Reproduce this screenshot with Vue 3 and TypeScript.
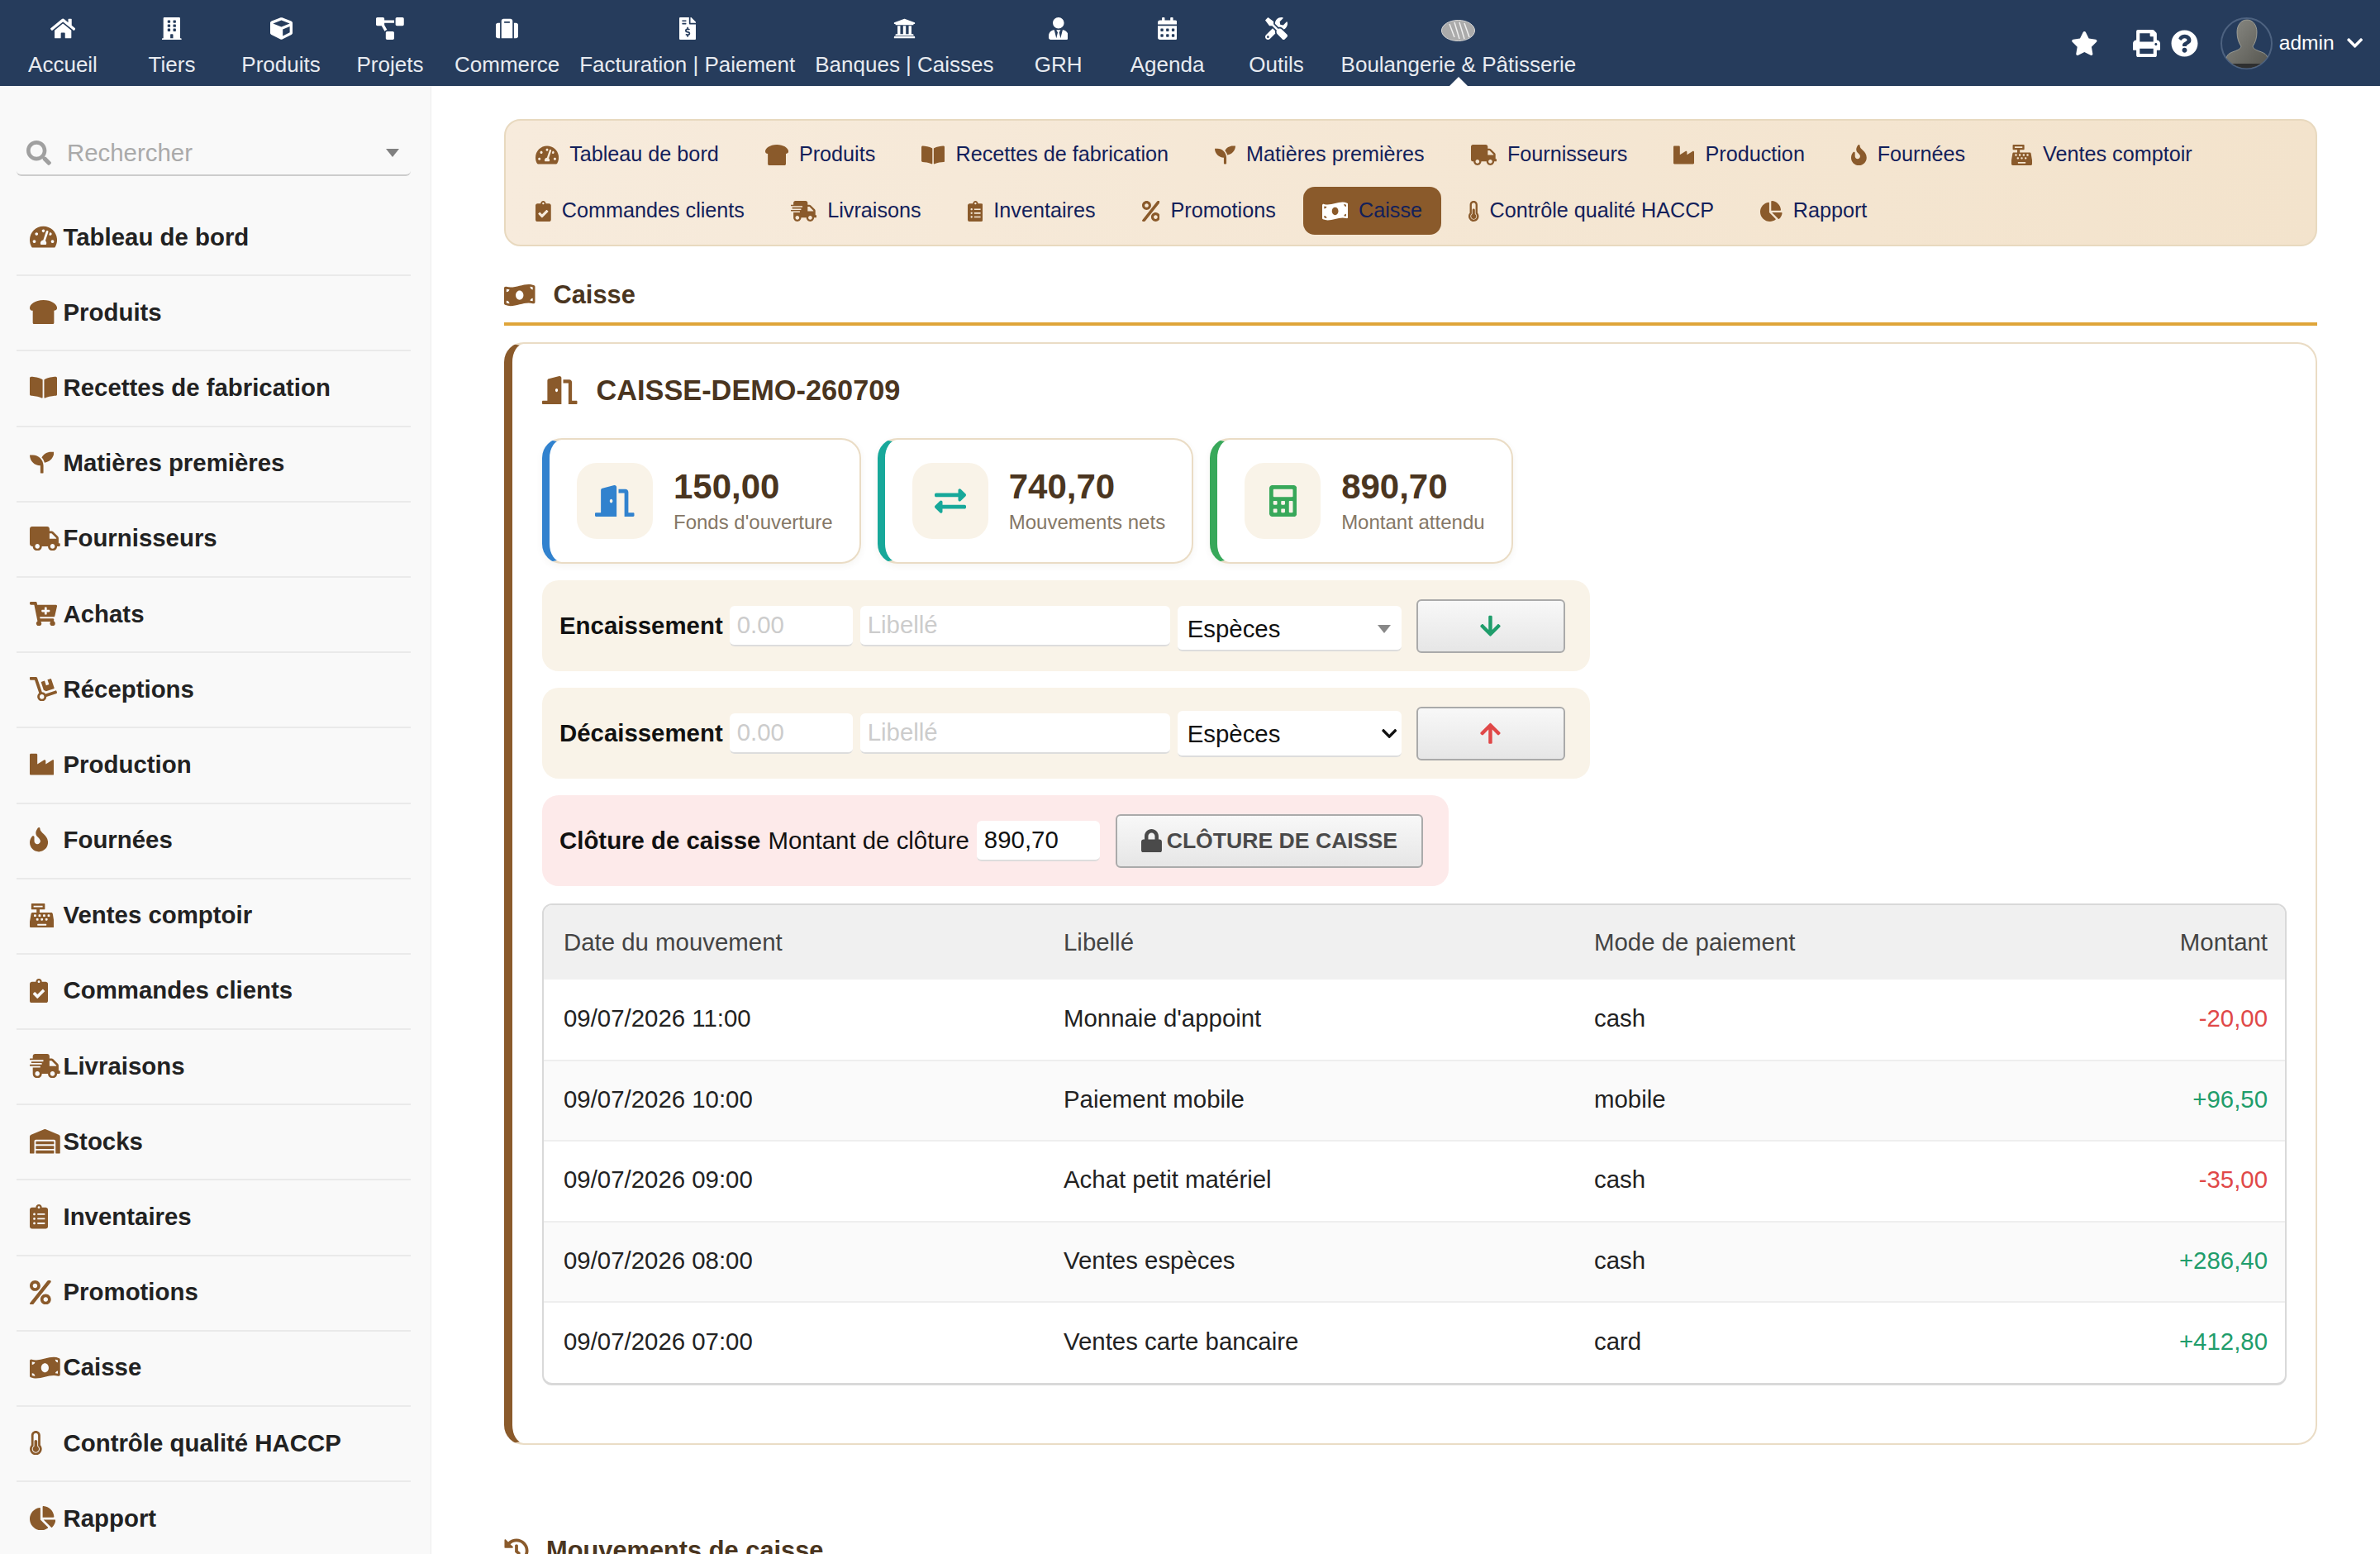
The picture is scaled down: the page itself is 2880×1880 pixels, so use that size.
<script setup lang="ts">
import { h } from 'vue'

// FontAwesome 5 style glyphs: [width on a 512 tall grid, path]
const icons: Record<string, [number, string]> = {
  home: [576, 'M280.37 148.26L96 300.11V464a16 16 0 0 0 16 16l112.06-.29a16 16 0 0 0 15.92-16V368a16 16 0 0 1 16-16h64a16 16 0 0 1 16 16v95.64a16 16 0 0 0 16 16.05L464 480a16 16 0 0 0 16-16V300L295.67 148.26a12.19 12.19 0 0 0-15.3 0zM571.6 251.47L488 182.56V44.05a12 12 0 0 0-12-12h-56a12 12 0 0 0-12 12v72.61L318.47 43a48 48 0 0 0-61 0L4.34 251.47a12 12 0 0 0-1.6 16.9l25.5 31A12 12 0 0 0 45.15 301l235.22-193.74a12.19 12.19 0 0 1 15.3 0L530.9 301a12 12 0 0 0 16.9-1.6l25.5-31a12 12 0 0 0-1.7-16.93z'],
  building: [448, 'M436 480h-20V24c0-13.255-10.745-24-24-24H56C42.745 0 32 10.745 32 24v456H12c-6.627 0-12 5.373-12 12v20h448v-20c0-6.627-5.373-12-12-12zM128 76c0-6.627 5.373-12 12-12h40c6.627 0 12 5.373 12 12v40c0 6.627-5.373 12-12 12h-40c-6.627 0-12-5.373-12-12V76zm0 96c0-6.627 5.373-12 12-12h40c6.627 0 12 5.373 12 12v40c0 6.627-5.373 12-12 12h-40c-6.627 0-12-5.373-12-12v-40zm52 148h-40c-6.627 0-12-5.373-12-12v-40c0-6.627 5.373-12 12-12h40c6.627 0 12 5.373 12 12v40c0 6.627-5.373 12-12 12zm76 160h-64v-84c0-6.627 5.373-12 12-12h40c6.627 0 12 5.373 12 12v84zm64-172c0 6.627-5.373 12-12 12h-40c-6.627 0-12-5.373-12-12v-40c0-6.627 5.373-12 12-12h40c6.627 0 12 5.373 12 12v40zm0-96c0 6.627-5.373 12-12 12h-40c-6.627 0-12-5.373-12-12v-40c0-6.627 5.373-12 12-12h40c6.627 0 12 5.373 12 12v40zm0-96c0 6.627-5.373 12-12 12h-40c-6.627 0-12-5.373-12-12V76c0-6.627 5.373-12 12-12h40c6.627 0 12 5.373 12 12v40z'],
  cube: [512, 'M239.1 6.3l-208 78c-18.7 7-31.1 25-31.1 45v225.1c0 18.2 10.3 34.8 26.5 42.9l208 104c13.5 6.8 29.4 6.8 42.9 0l208-104c16.3-8.1 26.5-24.8 26.5-42.9V129.3c0-20-12.4-37.9-31.1-44.9l-208-78C262 2.2 250 2.2 239.1 6.3zM256 68.4l192 72v1.1l-192 78-192-78v-1.1l192-72zm32 356V275.5l160-65v133.9l-160 80z'],
  diagram: [640, 'M384 320H256c-17.67 0-32 14.33-32 32v128c0 17.67 14.33 32 32 32h128c17.67 0 32-14.33 32-32V352c0-17.67-14.33-32-32-32zM192 32c0-17.67-14.33-32-32-32H32C14.33 0 0 14.33 0 32v128c0 17.67 14.33 32 32 32h95.72l73.16 128.04C211.98 300.98 232.4 288 256 288h.28L192 175.51V128h224V64H192V32zM608 0H480c-17.67 0-32 14.33-32 32v128c0 17.67 14.33 32 32 32h128c17.67 0 32-14.33 32-32V32c0-17.67-14.33-32-32-32z'],
  suitcase: [512, 'M128 480h256V80c0-26.5-21.5-48-48-48H176c-26.5 0-48 21.5-48 48v400zm64-384h128v32H192V96zm320 80v256c0 26.5-21.5 48-48 48h-48V128h48c26.5 0 48 21.5 48 48zM96 480H48c-26.5 0-48-21.5-48-48V176c0-26.5 21.5-48 48-48h48v352z'],
  invoice: [384, 'M377 105L279.1 7c-4.5-4.5-10.6-7-17-7H256v128h128v-6.1c0-6.3-2.5-12.4-7-16.9zm-153 31V0H24C10.7 0 0 10.7 0 24v464c0 13.3 10.7 24 24 24h336c13.3 0 24-10.7 24-24V160H248c-13.2 0-24-10.8-24-24zM64 72c0-4.42 3.58-8 8-8h80c4.42 0 8 3.58 8 8v16c0 4.42-3.58 8-8 8H72c-4.42 0-8-3.58-8-8V72zm0 80v-16c0-4.42 3.58-8 8-8h80c4.42 0 8 3.58 8 8v16c0 4.42-3.58 8-8 8H72c-4.42 0-8-3.58-8-8zm144 263.88V440c0 4.42-3.58 8-8 8h-16c-4.42 0-8-3.58-8-8v-24.29c-11.29-.58-22.27-4.52-31.37-11.35-3.9-2.93-4.1-8.77-.57-12.14l11.75-11.21c2.77-2.64 6.89-2.76 10.13-.73 3.87 2.42 8.26 3.72 12.82 3.72h28.11c6.5 0 11.8-5.92 11.8-13.19 0-5.95-3.61-11.19-8.77-12.73l-45-13.5c-18.59-5.58-31.58-23.42-31.58-43.39 0-24.52 19.05-44.44 42.67-45.07V232c0-4.42 3.58-8 8-8h16c4.42 0 8 3.58 8 8v24.29c11.29.58 22.27 4.51 31.37 11.35 3.9 2.93 4.1 8.77.57 12.14l-11.75 11.21c-2.77 2.64-6.89 2.76-10.13.73-3.87-2.43-8.26-3.72-12.82-3.72h-28.11c-6.5 0-11.8 5.92-11.8 13.19 0 5.95 3.61 11.19 8.77 12.73l45 13.5c18.59 5.58 31.58 23.42 31.58 43.39 0 24.53-19.05 44.44-42.67 45.07z'],
  university: [512, 'M496 128v16a8 8 0 0 1-8 8h-24v12c0 6.627-5.373 12-12 12H60c-6.627 0-12-5.373-12-12v-12H24a8 8 0 0 1-8-8v-16a8 8 0 0 1 4.941-7.392l232-88a7.996 7.996 0 0 1 6.118 0l232 88A8 8 0 0 1 496 128zm-24 304H40c-13.255 0-24 10.745-24 24v16a8 8 0 0 0 8 8h464a8 8 0 0 0 8-8v-16c0-13.255-10.745-24-24-24zM96 192v192H60c-6.627 0-12 5.373-12 12v20h416v-20c0-6.627-5.373-12-12-12h-36V192h-64v192h-64V192h-64v192h-64V192H96z'],
  userTie: [448, 'M224 256c70.7 0 128-57.3 128-128S294.7 0 224 0 96 57.3 96 128s57.3 128 128 128zm95.8 32.6L272 480l-32-136 32-56h-96l32 56-32 136-47.8-191.4C56.9 292 0 350.3 0 422.4V464c0 26.5 21.5 48 48 48h352c26.5 0 48-21.5 48-48v-41.6c0-72.1-56.9-130.4-128.2-133.8z'],
  calendar: [448, 'M0 464c0 26.5 21.5 48 48 48h352c26.5 0 48-21.5 48-48V192H0v272zm320-196c0-6.6 5.4-12 12-12h40c6.6 0 12 5.4 12 12v40c0 6.6-5.4 12-12 12h-40c-6.6 0-12-5.4-12-12v-40zm0 128c0-6.6 5.4-12 12-12h40c6.6 0 12 5.4 12 12v40c0 6.6-5.4 12-12 12h-40c-6.6 0-12-5.4-12-12v-40zM192 268c0-6.6 5.4-12 12-12h40c6.6 0 12 5.4 12 12v40c0 6.6-5.4 12-12 12h-40c-6.6 0-12-5.4-12-12v-40zm0 128c0-6.6 5.4-12 12-12h40c6.6 0 12 5.4 12 12v40c0 6.6-5.4 12-12 12h-40c-6.6 0-12-5.4-12-12v-40zM64 268c0-6.6 5.4-12 12-12h40c6.6 0 12 5.4 12 12v40c0 6.6-5.4 12-12 12H76c-6.6 0-12-5.4-12-12v-40zm0 128c0-6.6 5.4-12 12-12h40c6.6 0 12 5.4 12 12v40c0 6.6-5.4 12-12 12H76c-6.6 0-12-5.4-12-12v-40zM400 64h-48V16c0-8.8-7.2-16-16-16h-32c-8.8 0-16 7.2-16 16v48H160V16c0-8.8-7.2-16-16-16h-32c-8.8 0-16 7.2-16 16v48H48C21.5 64 0 85.5 0 112v48h448v-48c0-26.5-21.5-48-48-48z'],
  tools: [512, 'M501.1 395.7L384 278.6c-23.1-23.1-57.6-27.6-85.4-13.9L192 158.1V96L64 0 0 64l96 128h62.1l106.6 106.6c-13.6 27.8-9.2 62.3 13.9 85.4l117.1 117.1c14.6 14.6 38.2 14.6 52.7 0l52.7-52.7c14.5-14.6 14.5-38.2 0-52.7zM331.7 225c28.3 0 54.9 11 74.9 31l19.4 19.4c15.8-6.9 30.8-16.5 43.8-29.5 37.1-37.1 49.7-89.3 37.9-136.7-2.2-9-13.5-12.1-20.1-5.5l-74.4 74.4-67.9-11.3L334 98.9l74.4-74.4c6.6-6.6 3.4-17.9-5.7-20.2-47.4-11.7-99.6.9-136.6 37.9-28.5 28.5-41.9 66.1-41.2 103.6l82.1 82.1c8.1-1.9 16.5-2.9 24.7-2.9zm-103.9 82l-56.7-56.7L18.7 402.8c-25 25-25 65.5 0 90.5s65.5 25 90.5 0l123.6-123.6c-7.6-19.9-9.9-41.6-5-62.7zM64 472c-13.2 0-24-10.8-24-24 0-13.3 10.7-24 24-24s24 10.7 24 24c0 13.2-10.7 24-24 24z'],
  star: [576, 'M259.3 17.8L194 150.2 47.9 171.5c-26.2 3.8-36.7 36.1-17.7 54.6l105.7 103-25 145.5c-4.5 26.3 23.2 46 46.4 33.7L288 439.6l130.7 68.7c23.2 12.2 50.9-7.4 46.4-33.7l-25-145.5 105.7-103c19-18.5 8.5-50.8-17.7-54.6L382 150.2 316.7 17.8c-11.7-23.6-45.6-23.9-57.4 0z'],
  print: [512, 'M448 192V77.25c0-8.49-3.37-16.62-9.37-22.63L393.37 9.37c-6-6-14.14-9.37-22.63-9.37H96C78.33 0 64 14.33 64 32v160c-35.35 0-64 28.65-64 64v112c0 8.84 7.16 16 16 16h48v96c0 17.67 14.33 32 32 32h320c17.67 0 32-14.33 32-32v-96h48c8.84 0 16-7.16 16-16V256c0-35.35-28.65-64-64-64zm-64 256H128v-96h256v96zm0-224H128V64h192v48c0 8.84 7.16 16 16 16h48v96zm48 72c-13.25 0-24-10.75-24-24 0-13.26 10.75-24 24-24s24 10.74 24 24c0 13.25-10.75 24-24 24z'],
  question: [512, 'M504 256c0 136.997-111.043 248-248 248S8 392.997 8 256C8 119.083 119.043 8 256 8s248 111.083 248 248zM262.655 90c-54.497 0-89.255 22.957-116.549 63.758-3.536 5.286-2.353 12.415 2.715 16.258l34.699 26.31c5.205 3.947 12.621 3.008 16.665-2.122 17.864-22.658 30.113-35.797 57.303-35.797 20.429 0 45.698 13.148 45.698 32.958 0 14.976-12.363 22.667-32.534 33.976C247.128 238.528 216 254.941 216 296v4c0 6.627 5.373 12 12 12h56c6.627 0 12-5.373 12-12v-1.333c0-28.462 83.186-29.647 83.186-106.667 0-58.002-60.165-102-116.531-102zM256 338c-25.365 0-46 20.635-46 46 0 25.364 20.635 46 46 46s46-20.636 46-46c0-25.365-20.635-46-46-46z'],
  chevron: [448, 'M207.029 381.476L12.686 187.132c-9.373-9.373-9.373-24.569 0-33.941l22.667-22.667c9.357-9.357 24.522-9.375 33.901-.04L224 284.505l154.745-154.021c9.379-9.335 24.544-9.317 33.901.04l22.667 22.667c9.373 9.373 9.373 24.569 0 33.941L240.971 381.476c-9.373 9.372-24.569 9.372-33.942 0z'],
  search: [512, 'M505 442.7L405.3 343c-4.5-4.5-10.6-7-17-7H372c27.6-35.3 44-79.7 44-128C416 93.1 322.9 0 208 0S0 93.1 0 208s93.1 208 208 208c48.3 0 92.7-16.4 128-44v16.3c0 6.4 2.5 12.5 7 17l99.7 99.7c9.4 9.4 24.6 9.4 33.9 0l28.3-28.3c9.4-9.4 9.4-24.6.1-34zM208 336c-70.7 0-128-57.2-128-128 0-70.7 57.2-128 128-128 70.7 0 128 57.2 128 128 0 70.7-57.2 128-128 128z'],
  gauge: [576, 'M288 32C128.94 32 0 160.94 0 320c0 52.8 14.25 102.26 39.06 144.8 5.61 9.62 16.3 15.2 27.44 15.2h443c11.14 0 21.83-5.58 27.44-15.2C561.75 422.26 576 372.8 576 320c0-159.06-128.94-288-288-288zm0 64c14.71 0 26.58 10.13 30.32 23.65-1.11 2.26-2.64 4.23-3.45 6.67l-9.22 27.67c-5.13 3.49-10.97 6.01-17.64 6.01-17.67 0-32-14.33-32-32S270.33 96 288 96zM96 384c-17.67 0-32-14.33-32-32s14.33-32 32-32 32 14.33 32 32-14.33 32-32 32zm48-160c-17.67 0-32-14.33-32-32s14.33-32 32-32 32 14.33 32 32-14.33 32-32 32zm246.77-72.41l-61.33 184C343.13 347.33 352 364.54 352 384c0 11.72-3.38 22.55-8.88 32H232.88c-5.5-9.45-8.88-20.28-8.88-32 0-33.94 26.5-61.43 59.9-63.59l61.34-184.01c4.17-12.56 17.73-19.45 30.36-15.17 12.57 4.19 19.35 17.79 15.17 30.36zm14.66 57.2l15.52-46.55c3.47-1.29 7.13-2.23 11.05-2.23 17.67 0 32 14.33 32 32s-14.33 32-32 32c-11.38-.01-20.89-6.27-26.57-15.22zM480 384c-17.67 0-32-14.33-32-32s14.33-32 32-32 32 14.33 32 32-14.33 32-32 32z'],
  bread: [576, 'M288 0C108 0 0 93.4 0 169.14 0 199.44 24.24 224 64 224v256c0 17.67 16.12 32 36 32h376c19.88 0 36-14.33 36-32V224c39.76 0 64-24.56 64-54.86C576 93.4 468 0 288 0z'],
  book: [576, 'M542.22 32.05c-54.8 3.11-163.72 14.43-230.96 55.59-4.64 2.84-7.27 7.89-7.27 13.17v363.87c0 11.55 12.63 18.85 23.28 13.49 69.18-34.82 169.23-44.32 218.7-46.92 16.89-.89 30.02-14.43 30.02-30.66V62.75c.01-17.71-15.35-31.74-33.77-30.7zM264.73 87.64C197.5 46.48 88.58 35.17 33.78 32.05 15.36 31.01 0 45.04 0 62.75V400.6c0 16.24 13.13 29.78 30.02 30.66 49.49 2.6 149.59 12.11 218.77 46.95 10.62 5.35 23.21-1.94 23.21-13.46V100.63c0-5.29-2.62-10.14-7.27-12.99z'],
  seedling: [512, 'M64 96H0c0 123.7 100.3 224 224 224v144c0 8.8 7.2 16 16 16h32c8.8 0 16-7.2 16-16V320C288 196.3 187.7 96 64 96zm384-64c-84.2 0-157.4 46.5-195.7 115.2 27.7 30.2 48.2 66.9 59 107.6C424 243.1 512 147.9 512 32h-64z'],
  truck: [640, 'M624 352h-16V243.9c0-12.7-5.1-24.9-14.1-33.9L494 110.1c-9-9-21.2-14.1-33.9-14.1H416V48c0-26.5-21.5-48-48-48H48C21.5 0 0 21.5 0 48v320c0 26.5 21.5 48 48 48h16c0 53 43 96 96 96s96-43 96-96h128c0 53 43 96 96 96s96-43 96-96h48c8.8 0 16-7.2 16-16v-32c0-8.8-7.2-16-16-16zM160 464c-26.5 0-48-21.5-48-48s21.5-48 48-48 48 21.5 48 48-21.5 48-48 48zm320 0c-26.5 0-48-21.5-48-48s21.5-48 48-48 48 21.5 48 48-21.5 48-48 48zm80-208H416V144h44.1l99.9 99.9V256z'],
  cart: [576, 'M504.717 320H211.572l6.545 32h268.418c15.401 0 26.816 14.301 23.403 29.319l-5.517 24.276C523.112 414.668 536 433.828 536 456c0 31.202-25.519 56.444-56.824 55.994-29.823-.429-54.35-24.631-55.155-54.447-.44-16.287 6.085-31.049 16.803-41.548H231.176C241.553 426.165 248 440.326 248 456c0 31.813-26.528 57.431-58.67 55.938-28.54-1.325-51.751-24.385-53.251-52.917-1.158-22.034 10.436-41.455 28.051-51.586L93.883 64H24C10.745 64 0 53.255 0 40V24C0 10.745 10.745 0 24 0h102.529c11.401 0 21.228 8.021 23.513 19.19L159.208 64H551.99c15.401 0 26.816 14.301 23.403 29.319l-47.273 208C525.637 312.246 515.923 320 504.717 320zM408 168h-48v-40c0-8.837-7.163-16-16-16h-16c-8.837 0-16 7.163-16 16v40h-48c-8.837 0-16 7.163-16 16v16c0 8.837 7.163 16 16 16h48v40c0 8.837 7.163 16 16 16h16c8.837 0 16-7.163 16-16v-40h48c8.837 0 16-7.163 16-16v-16c0-8.837-7.163-16-16-16z'],
  dolly: [576, 'M294.2 277.7c18 5 34.7 13.4 49.5 24.7l161.5-53.8c8.4-2.8 12.9-11.9 10.1-20.2L454.9 47.2c-2.8-8.4-11.9-12.9-20.2-10.1l-61.1 20.4 33.1 99.4L346 177l-33.1-99.4-61.6 20.5c-8.4 2.8-12.9 11.9-10.1 20.2l53 159.4zm281 48.7L565 296c-2.8-8.4-11.9-12.9-20.2-10.1l-213.5 71.2c-17.2-22-43.6-36.4-73.5-37L158.4 21.9C154 8.8 141.8 0 128 0H16C7.2 0 0 7.2 0 16v32c0 8.8 7.2 16 16 16h88.9l92.2 276.7c-26.1 20.4-41.7 53.6-36 90.5 6.1 39.4 37.9 72.3 77.3 79.2 60.2 10.7 112.3-34.8 113.4-92.6l213.3-71.2c8.3-2.8 12.9-11.8 10.1-20.2zM256 464c-26.5 0-48-21.5-48-48s21.5-48 48-48 48 21.5 48 48-21.5 48-48 48z'],
  industry: [512, 'M475.115 163.781L336 252.309v-68.28c0-18.916-20.931-30.399-36.885-20.248L160 252.309V56c0-13.255-10.745-24-24-24H24C10.745 32 0 42.745 0 56v400c0 13.255 10.745 24 24 24h464c13.255 0 24-10.745 24-24V184.029c0-18.917-20.931-30.399-36.885-20.248z'],
  fire: [384, 'M216 23.86c0-23.8-30.65-32.77-44.15-13.04C48 191.85 224 200 224 288c0 35.63-29.11 64.46-64.85 63.99-35.17-.45-63.15-29.77-63.15-64.94v-85.51c0-21.7-26.47-32.23-41.43-16.5C27.8 213.16 0 261.33 0 320c0 105.87 86.13 192 192 192s192-86.13 192-192c0-170.29-168-193-168-296.14z'],
  register: [512, 'M511.1 378.8l-26.7-160c-2.6-15.4-15.9-26.7-31.6-26.7H208v-64h96c8.8 0 16-7.2 16-16V16c0-8.8-7.2-16-16-16H48c-8.8 0-16 7.2-16 16v96c0 8.8 7.2 16 16 16h96v64H59.1c-15.6 0-29 11.3-31.6 26.7L.8 378.7c-.6 3.5-.9 7-.9 10.5V480c0 17.7 14.3 32 32 32h448c17.7 0 32-14.3 32-32v-90.7c.1-3.5-.2-7-.8-10.5zM280 248c0-8.8 7.2-16 16-16h16c8.8 0 16 7.2 16 16v16c0 8.8-7.2 16-16 16h-16c-8.8 0-16-7.2-16-16v-16zm-32 64h16c8.8 0 16 7.2 16 16v16c0 8.8-7.2 16-16 16h-16c-8.8 0-16-7.2-16-16v-16c0-8.8 7.2-16 16-16zm-32-80c8.8 0 16 7.2 16 16v16c0 8.8-7.2 16-16 16h-16c-8.8 0-16-7.2-16-16v-16c0-8.8 7.2-16 16-16h16zM80 80V48h192v32H80zm40 200h-16c-8.8 0-16-7.2-16-16v-16c0-8.8 7.2-16 16-16h16c8.8 0 16 7.2 16 16v16c0 8.8-7.2 16-16 16zm16 64v-16c0-8.8 7.2-16 16-16h16c8.8 0 16 7.2 16 16v16c0 8.8-7.2 16-16 16h-16c-8.8 0-16-7.2-16-16zm216 112c0 4.4-3.6 8-8 8H168c-4.4 0-8-3.6-8-8v-16c0-4.4 3.6-8 8-8h176c4.4 0 8 3.6 8 8v16zm24-112c0 8.8-7.2 16-16 16h-16c-8.8 0-16-7.2-16-16v-16c0-8.8 7.2-16 16-16h16c8.8 0 16 7.2 16 16v16zm48-80c0 8.8-7.2 16-16 16h-16c-8.8 0-16-7.2-16-16v-16c0-8.8 7.2-16 16-16h16c8.8 0 16 7.2 16 16v16z'],
  clipCheck: [384, 'M336 64h-80c0-35.3-28.7-64-64-64s-64 28.7-64 64H48C21.5 64 0 85.5 0 112v352c0 26.5 21.5 48 48 48h288c26.5 0 48-21.5 48-48V112c0-26.5-21.5-48-48-48zM192 40c13.3 0 24 10.7 24 24s-10.7 24-24 24-24-10.7-24-24 10.7-24 24-24zm121.2 231.8l-143 141.8c-4.7 4.7-12.3 4.6-17-.1l-82.6-83.3c-4.7-4.7-4.6-12.3.1-17L99.1 285c4.7-4.7 12.3-4.6 17 .1l46 46.4 106-105.2c4.7-4.7 12.3-4.6 17 .1l28.2 28.4c4.7 4.8 4.6 12.3-.1 17z'],
  shipping: [640, 'M624 352h-16V243.9c0-12.7-5.1-24.9-14.1-33.9L494 110.1c-9-9-21.2-14.1-33.9-14.1H416V48c0-26.5-21.5-48-48-48H112C85.5 0 64 21.5 64 48v48H8c-4.4 0-8 3.6-8 8v16c0 4.4 3.6 8 8 8h272c4.4 0 8 3.6 8 8v16c0 4.4-3.6 8-8 8H40c-4.4 0-8 3.6-8 8v16c0 4.4 3.6 8 8 8h208c4.4 0 8 3.6 8 8v16c0 4.4-3.6 8-8 8H8c-4.4 0-8 3.6-8 8v16c0 4.4 3.6 8 8 8h208c4.4 0 8 3.6 8 8v16c0 4.4-3.6 8-8 8H64v128c0 53 43 96 96 96s96-43 96-96h128c0 53 43 96 96 96s96-43 96-96h48c8.8 0 16-7.2 16-16v-32c0-8.8-7.2-16-16-16zM160 464c-26.5 0-48-21.5-48-48s21.5-48 48-48 48 21.5 48 48-21.5 48-48 48zm320 0c-26.5 0-48-21.5-48-48s21.5-48 48-48 48 21.5 48 48-21.5 48-48 48zm80-208H416V144h44.1l99.9 99.9V256z'],
  warehouse: [640, 'M504 352H136.4c-4.4 0-8 3.6-8 8l-.1 48c0 4.4 3.6 8 8 8H504c4.4 0 8-3.6 8-8v-48c0-4.4-3.6-8-8-8zm0 96H136.1c-4.4 0-8 3.6-8 8l-.1 48c0 4.4 3.6 8 8 8h368c4.4 0 8-3.6 8-8v-48c0-4.4-3.6-8-8-8zm0-192H136.6c-4.4 0-8 3.6-8 8l-.1 48c0 4.4 3.6 8 8 8H504c4.4 0 8-3.6 8-8v-48c0-4.4-3.6-8-8-8zm106.5-139L338.4 3.7a48.15 48.15 0 0 0-36.9 0L29.5 117C11.7 124.5 0 141.9 0 161.3V504c0 4.4 3.6 8 8 8h80c4.4 0 8-3.6 8-8V256c0-17.6 14.6-32 32.6-32h382.8c18 0 32.6 14.4 32.6 32v248c0 4.4 3.6 8 8 8h80c4.4 0 8-3.6 8-8V161.3c0-19.4-11.7-36.8-29.5-44.3z'],
  clipList: [384, 'M336 64h-80c0-35.3-28.7-64-64-64s-64 28.7-64 64H48C21.5 64 0 85.5 0 112v352c0 26.5 21.5 48 48 48h288c26.5 0 48-21.5 48-48V112c0-26.5-21.5-48-48-48zM96 424c-13.3 0-24-10.7-24-24s10.7-24 24-24 24 10.7 24 24-10.7 24-24 24zm0-96c-13.3 0-24-10.7-24-24s10.7-24 24-24 24 10.7 24 24-10.7 24-24 24zm0-96c-13.3 0-24-10.7-24-24s10.7-24 24-24 24 10.7 24 24-10.7 24-24 24zm96-192c13.3 0 24 10.7 24 24s-10.7 24-24 24-24-10.7-24-24 10.7-24 24-24zm128 368c0 4.4-3.6 8-8 8H168c-4.4 0-8-3.6-8-8v-16c0-4.4 3.6-8 8-8h144c4.4 0 8 3.6 8 8v16zm0-96c0 4.4-3.6 8-8 8H168c-4.4 0-8-3.6-8-8v-16c0-4.4 3.6-8 8-8h144c4.4 0 8 3.6 8 8v16zm0-96c0 4.4-3.6 8-8 8H168c-4.4 0-8-3.6-8-8v-16c0-4.4 3.6-8 8-8h144c4.4 0 8 3.6 8 8v16z'],
  percent: [448, 'M112 224c61.9 0 112-50.1 112-112S173.9 0 112 0 0 50.1 0 112s50.1 112 112 112zm0-160c26.5 0 48 21.5 48 48s-21.5 48-48 48-48-21.5-48-48 21.5-48 48-48zm224 224c-61.9 0-112 50.1-112 112s50.1 112 112 112 112-50.1 112-112-50.1-112-112-112zm0 160c-26.5 0-48-21.5-48-48s21.5-48 48-48 48 21.5 48 48-21.5 48-48 48zM392.3.2l31.6.1c19.4.1 30.9 21.8 19.7 37.8L77.4 501.6a23.95 23.95 0 0 1-19.6 10.2l-33.4-.1c-19.5 0-30.9-21.9-19.7-37.8l368-463.7C377.2 4 384.5.2 392.3.2z'],
  money: [640, 'M621.16 54.46C582.37 38.19 543.55 32 504.75 32c-123.17-.01-246.33 62.34-369.5 62.34-30.89 0-61.76-3.92-92.65-13.72-3.47-1.1-6.95-1.62-10.35-1.62C15.04 79 0 92.32 0 110.81v317.26c0 12.63 7.23 24.6 18.84 29.46C57.63 473.81 96.45 480 135.25 480c123.17 0 246.34-62.35 369.51-62.35 30.89 0 61.76 3.92 92.65 13.72 3.47 1.1 6.95 1.62 10.35 1.62 17.21 0 32.25-13.32 32.25-31.81V83.93c-.01-12.64-7.24-24.6-18.85-29.47zM48 132.22c20.12 5.04 41.12 7.57 62.72 8.93C104.84 170.54 79 192.69 48 192.69v-60.47zm0 285v-47.78c34.37 0 62.18 27.27 63.71 61.4-22.53-1.81-43.59-6.31-63.71-13.62zM320 352c-44.19 0-80-42.99-80-96 0-53.02 35.82-96 80-96s80 42.98 80 96c0 53.03-35.83 96-80 96zm272 27.78c-17.52-4.39-35.71-6.85-54.32-8.44 5.87-26.08 27.5-45.88 54.32-49.28v57.72zm0-236.11c-30.89-3.91-54.86-29.7-55.81-61.55 19.54 2.17 38.09 6.23 55.81 12.66v48.89z'],
  thermo: [256, 'M192 384c0 35.346-28.654 64-64 64s-64-28.654-64-64c0-23.685 12.876-44.349 32-55.417V224c0-17.673 14.327-32 32-32s32 14.327 32 32v104.583c19.124 11.068 32 31.732 32 55.417zm32-84.653c19.912 22.563 32 52.194 32 84.653 0 70.696-57.303 128-128 128-.299 0-.609-.001-.909-.003C56.789 511.509-.357 453.636.002 383.333.166 351.135 12.225 321.755 32 299.347V96c0-53.019 42.981-96 96-96s96 42.981 96 96v203.347zM208 384c0-34.339-19.37-52.19-32-66.502V96c0-26.467-21.533-48-48-48S80 69.533 80 96v221.498c-12.732 14.428-31.825 32.141-31.999 66.08-.224 43.876 35.563 80.116 79.423 80.42L128 464c44.112 0 80-35.888 80-80z'],
  pie: [544, 'M527.79 288H290.5l158.03 158.03c6.04 6.04 15.98 6.53 22.19.68 38.7-36.46 65.32-85.61 73.13-140.86 1.34-9.46-6.51-17.85-16.06-17.85zm-15.83-64.8C503.72 103.74 408.26 8.28 288.8.04 279.68-.59 272 7.1 272 16.24V240h223.77c9.14 0 16.82-7.68 16.19-16.8zM224 288V50.71c0-9.55-8.39-17.4-17.84-16.06C86.99 51.49-4.1 155.6.14 280.37 4.5 408.51 114.83 513.59 243.03 511.98c50.4-.63 96.97-16.87 135.26-44.03 7.9-5.6 8.42-17.23 1.57-24.08L224 288z'],
  door: [640, 'M624 448h-80V113.45C544 86.19 522.47 64 496 64H384v64h96v384h144c8.84 0 16-7.16 16-16v-32c0-8.84-7.16-16-16-16zM312.24 1.01l-192 49.74C105.99 54.44 96 67.7 96 82.92V448H16c-8.84 0-16 7.16-16 16v32c0 8.84 7.16 16 16 16h336V33.18c0-21.58-19.56-37.41-39.76-32.17zM264 288c-13.25 0-24-14.33-24-32 0-17.67 10.75-32 24-32s24 14.33 24 32c0 17.67-10.75 32-24 32z'],
  exchange: [512, 'M0 168v-16c0-13.255 10.745-24 24-24h360V80c0-21.367 25.899-32.042 40.971-16.971l80 80c9.372 9.373 9.372 24.569 0 33.941l-80 80C409.956 271.982 384 261.456 384 240v-48H24c-13.255 0-24-10.745-24-24zm488 152H128v-48c0-21.314-25.862-32.08-40.971-16.971l-80 80c-9.372 9.373-9.372 24.569 0 33.941l80 80C102.057 463.997 128 453.437 128 432v-48h360c13.255 0 24-10.745 24-24v-16c0-13.255-10.745-24-24-24z'],
  calc: [448, 'M400 0H48C22.4 0 0 22.4 0 48v416c0 25.6 22.4 48 48 48h352c25.6 0 48-22.4 48-48V48c0-25.6-22.4-48-48-48zM128 435c0 6.4-6.4 12.8-12.8 12.8H76.8c-6.4 0-12.8-6.4-12.8-12.8v-38.4c0-6.4 6.4-12.8 12.8-12.8h38.4c6.4 0 12.8 6.4 12.8 12.8V435zm0-128c0 6.4-6.4 12.8-12.8 12.8H76.8c-6.4 0-12.8-6.4-12.8-12.8v-38.4c0-6.4 6.4-12.8 12.8-12.8h38.4c6.4 0 12.8 6.4 12.8 12.8V307zm128 128c0 6.4-6.4 12.8-12.8 12.8h-38.4c-6.4 0-12.8-6.4-12.8-12.8v-38.4c0-6.4 6.4-12.8 12.8-12.8h38.4c6.4 0 12.8 6.4 12.8 12.8V435zm0-128c0 6.4-6.4 12.8-12.8 12.8h-38.4c-6.4 0-12.8-6.4-12.8-12.8v-38.4c0-6.4 6.4-12.8 12.8-12.8h38.4c6.4 0 12.8 6.4 12.8 12.8V307zm128 128c0 6.4-6.4 12.8-12.8 12.8h-38.4c-6.4 0-12.8-6.4-12.8-12.8V268.8c0-6.4 6.4-12.8 12.8-12.8h38.4c6.4 0 12.8 6.4 12.8 12.8V435zm0-256c0 6.4-6.4 12.8-12.8 12.8H76.8c-6.4 0-12.8-6.4-12.8-12.8V76.8C64 70.4 70.4 64 76.8 64h294.4c6.4 0 12.8 6.4 12.8 12.8V179z'],
  arrowDown: [448, 'M413.1 222.5l22.2 22.2c9.4 9.4 9.4 24.6 0 33.9L241 473c-9.4 9.4-24.6 9.4-33.9 0L12.7 278.6c-9.4-9.4-9.4-24.6 0-33.9l22.2-22.2c9.5-9.5 25-9.3 34.3.4L184 343.4V56c0-13.3 10.7-24 24-24h32c13.3 0 24 10.7 24 24v287.4l114.8-120.5c9.3-9.8 24.8-10 34.3-.4z'],
  arrowUp: [448, 'M34.9 289.5l-22.2-22.2c-9.4-9.4-9.4-24.6 0-33.9L207 39c9.4-9.4 24.6-9.4 33.9 0l194.3 194.3c9.4 9.4 9.4 24.6 0 33.9L413 289.4c-9.5 9.5-25 9.3-34.3-.4L264 168.6V456c0 13.3-10.7 24-24 24h-32c-13.3 0-24-10.7-24-24V168.6L69.2 289.1c-9.3 9.8-24.8 10-34.3.4z'],
  lock: [448, 'M400 224h-24v-72C376 68.2 307.8 0 224 0S72 68.2 72 152v72H48c-26.5 0-48 21.5-48 48v192c0 26.5 21.5 48 48 48h352c26.5 0 48-21.5 48-48V272c0-26.5-21.5-48-48-48zm-104 0H152v-72c0-39.7 32.3-72 72-72s72 32.3 72 72v72z'],
  history: [512, 'M504 255.531c.253 136.64-111.18 248.372-247.82 248.468-59.015.042-113.223-20.53-155.822-54.911-11.077-8.94-11.905-25.541-1.839-35.607l11.267-11.267c8.609-8.609 22.353-9.551 31.891-1.984C173.062 425.135 212.781 440 256 440c101.705 0 184-82.311 184-184 0-101.705-82.311-184-184-184-48.814 0-93.149 18.969-126.068 49.932l50.754 50.754c10.08 10.08 2.941 27.314-11.313 27.314H24c-8.837 0-16-7.163-16-16V38.627c0-14.254 17.234-21.393 27.314-11.314l49.372 49.372C129.209 34.136 189.552 8 256 8c136.81 0 247.747 110.78 248 247.531zm-180.912 78.784l9.823-12.63c8.138-10.463 6.253-25.542-4.21-33.679L288 256.349V152c0-13.255-10.745-24-24-24h-16c-13.255 0-24 10.745-24 24v135.651l65.409 50.874c10.463 8.137 25.541 6.253 33.679-4.21z'],
}

const Ic = (props: { n: string }) => {
  const [w, d] = icons[props.n]
  return h('svg', {
    class: 'ic',
    viewBox: `0 0 ${w} 512`,
    style: { width: `${w / 512}em` },
    fill: 'currentColor',
  }, [h('path', { d })])
}
Ic.props = ['n']

const topItems = [
  { label: 'Accueil', icon: 'home' },
  { label: 'Tiers', icon: 'building' },
  { label: 'Produits', icon: 'cube' },
  { label: 'Projets', icon: 'diagram' },
  { label: 'Commerce', icon: 'suitcase' },
  { label: 'Facturation | Paiement', icon: 'invoice' },
  { label: 'Banques | Caisses', icon: 'university' },
  { label: 'GRH', icon: 'userTie' },
  { label: 'Agenda', icon: 'calendar' },
  { label: 'Outils', icon: 'tools' },
]

const sideItems = [
  { label: 'Tableau de bord', icon: 'gauge' },
  { label: 'Produits', icon: 'bread' },
  { label: 'Recettes de fabrication', icon: 'book' },
  { label: 'Matières premières', icon: 'seedling' },
  { label: 'Fournisseurs', icon: 'truck' },
  { label: 'Achats', icon: 'cart' },
  { label: 'Réceptions', icon: 'dolly' },
  { label: 'Production', icon: 'industry' },
  { label: 'Fournées', icon: 'fire' },
  { label: 'Ventes comptoir', icon: 'register' },
  { label: 'Commandes clients', icon: 'clipCheck' },
  { label: 'Livraisons', icon: 'shipping' },
  { label: 'Stocks', icon: 'warehouse' },
  { label: 'Inventaires', icon: 'clipList' },
  { label: 'Promotions', icon: 'percent' },
  { label: 'Caisse', icon: 'money' },
  { label: 'Contrôle qualité HACCP', icon: 'thermo' },
  { label: 'Rapport', icon: 'pie' },
]

const tabs = [
  { label: 'Tableau de bord', icon: 'gauge' },
  { label: 'Produits', icon: 'bread' },
  { label: 'Recettes de fabrication', icon: 'book' },
  { label: 'Matières premières', icon: 'seedling' },
  { label: 'Fournisseurs', icon: 'truck' },
  { label: 'Production', icon: 'industry' },
  { label: 'Fournées', icon: 'fire' },
  { label: 'Ventes comptoir', icon: 'register' },
  { label: 'Commandes clients', icon: 'clipCheck' },
  { label: 'Livraisons', icon: 'shipping' },
  { label: 'Inventaires', icon: 'clipList' },
  { label: 'Promotions', icon: 'percent' },
  { label: 'Caisse', icon: 'money', active: true },
  { label: 'Contrôle qualité HACCP', icon: 'thermo' },
  { label: 'Rapport', icon: 'pie' },
]

const stats = [
  { value: '150,00', label: "Fonds d'ouverture", icon: 'door', tone: 'blue' },
  { value: '740,70', label: 'Mouvements nets', icon: 'exchange', tone: 'teal' },
  { value: '890,70', label: 'Montant attendu', icon: 'calc', tone: 'green' },
]

const rows = [
  { date: '09/07/2026 11:00', label: "Monnaie d'appoint", mode: 'cash', amount: '-20,00' },
  { date: '09/07/2026 10:00', label: 'Paiement mobile', mode: 'mobile', amount: '+96,50' },
  { date: '09/07/2026 09:00', label: 'Achat petit matériel', mode: 'cash', amount: '-35,00' },
  { date: '09/07/2026 08:00', label: 'Ventes espèces', mode: 'cash', amount: '+286,40' },
  { date: '09/07/2026 07:00', label: 'Ventes carte bancaire', mode: 'card', amount: '+412,80' },
]
</script>

<template>
  <div class="app">
    <header class="topbar">
      <a v-for="it in topItems" :key="it.label" class="top-item">
        <Ic :n="it.icon" />
        <span>{{ it.label }}</span>
      </a>
      <a class="top-item current">
        <svg class="logo" viewBox="0 0 41 26">
          <ellipse cx="20.5" cy="13" rx="20" ry="12.5" fill="#ababab" stroke="#d8d8d8" />
          <path d="M10 5l6 16M16 3l6 20M22 3l6 20M28 4l6 17" stroke="#efefef" stroke-width="1.5" fill="none" />
        </svg>
        <span>Boulangerie &amp; Pâtisserie</span>
      </a>
      <div class="top-right">
        <Ic n="star" class="t-star" />
        <Ic n="print" class="t-print" />
        <Ic n="question" class="t-help" />
        <svg class="avatar" viewBox="0 0 63 63">
          <defs>
            <linearGradient id="av" x1="0" y1="0" x2="1" y2="1">
              <stop offset="0" stop-color="#8c8c86" />
              <stop offset="1" stop-color="#55554f" />
            </linearGradient>
            <clipPath id="avc"><circle cx="31.5" cy="31.5" r="30" /></clipPath>
          </defs>
          <circle cx="31.5" cy="31.5" r="30.5" fill="#263c5c" stroke="#4d6280" stroke-width="2" />
          <g clip-path="url(#avc)">
            <path d="M7 60V51c0-6 4-8 10-10 5-2 7-3 8-6-3-4-5-10-5-17C20 9 25 3 32 3s12 6 12 15c0 7-2 13-5 17 1 3 3 4 8 6 6 2 10 4 10 10v9z" fill="url(#av)" stroke="#a9a99f" stroke-width="0.8" />
            <rect x="4" y="56" width="55" height="7" fill="#2e2f30" />
          </g>
        </svg>
        <span class="t-user">admin</span>
        <Ic n="chevron" class="t-chevron" />
      </div>
    </header>

    <div class="body">
      <aside class="sidebar">
        <div class="search">
          <Ic n="search" class="s-ico" />
          <span class="s-text">Rechercher</span>
          <i class="s-caret"></i>
        </div>
        <ul class="side-list">
          <li v-for="it in sideItems" :key="it.label" class="side-item">
            <span class="side-ico"><Ic :n="it.icon" /></span>
            <span>{{ it.label }}</span>
          </li>
        </ul>
      </aside>

      <main class="main">
        <nav class="tabs">
          <a v-for="t in tabs" :key="t.label" class="tab" :class="{ active: t.active }">
            <Ic :n="t.icon" />
            <span>{{ t.label }}</span>
          </a>
        </nav>

        <h2 class="section-title ruled"><Ic n="money" />Caisse</h2>

        <section class="card">
          <h3 class="card-title"><Ic n="door" />CAISSE-DEMO-260709</h3>

          <div class="stats">
            <div v-for="s in stats" :key="s.label" class="stat" :class="s.tone">
              <div class="stat-ico"><Ic :n="s.icon" /></div>
              <div class="stat-text">
                <strong>{{ s.value }}</strong>
                <span>{{ s.label }}</span>
              </div>
            </div>
          </div>

          <form class="form-row" @submit.prevent>
            <label>Encaissement</label>
            <input class="in-amount" type="text" placeholder="0.00" />
            <input class="in-label" type="text" placeholder="Libellé" />
            <div class="fake-select"><span>Espèces</span><i></i></div>
            <button class="btn btn-arrow in"><Ic n="arrowDown" /></button>
          </form>

          <form class="form-row" @submit.prevent>
            <label>Décaissement</label>
            <input class="in-amount" type="text" placeholder="0.00" />
            <input class="in-label" type="text" placeholder="Libellé" />
            <div class="select-wrap">
              <select class="native-select">
                <option>Espèces</option>
                <option>Carte</option>
                <option>Mobile</option>
              </select>
              <Ic n="chevron" class="select-chev" />
            </div>
            <button class="btn btn-arrow out"><Ic n="arrowUp" /></button>
          </form>

          <form class="form-row closing" @submit.prevent>
            <label>Clôture de caisse</label>
            <span class="plain">Montant de clôture</span>
            <input class="in-amount filled" type="text" value="890,70" />
            <button class="btn btn-close"><Ic n="lock" />CLÔTURE DE CAISSE</button>
          </form>

          <div class="table-wrap">
            <table>
              <colgroup>
                <col class="c1" /><col class="c2" /><col class="c3" /><col />
              </colgroup>
              <thead>
                <tr>
                  <th>Date du mouvement</th>
                  <th>Libellé</th>
                  <th>Mode de paiement</th>
                  <th class="num">Montant</th>
                </tr>
              </thead>
              <tbody>
                <tr v-for="r in rows" :key="r.date">
                  <td>{{ r.date }}</td>
                  <td>{{ r.label }}</td>
                  <td>{{ r.mode }}</td>
                  <td class="num" :class="r.amount[0] === '-' ? 'neg' : 'pos'">{{ r.amount }}</td>
                </tr>
              </tbody>
            </table>
          </div>
        </section>

        <h2 class="section-title moves"><Ic n="history" />Mouvements de caisse</h2>
      </main>
    </div>
  </div>
</template>

<style>
html, body { margin: 0; background: #fff; overflow: hidden; }
</style>

<style scoped>
.app {
  height: 1880px;
  overflow: hidden;
  font-family: "Liberation Sans", Arial, sans-serif;
  font-size: 29.4px;
  color: #222;
}
.ic { height: 1em; display: block; flex: none; }

/* top bar */
.topbar {
  height: 104px;
  background: #263c5c;
  display: flex;
  padding-left: 10px;
  box-sizing: border-box;
}
.top-item {
  position: relative;
  box-sizing: border-box;
  min-width: 132px;
  padding: 21px 12px 0;
  display: flex;
  flex-direction: column;
  align-items: center;
  font-size: 26px;
  color: #e8ebf0;
}
.top-item .ic { font-size: 27px; color: #fff; }
.top-item span { line-height: 30px; margin-top: 15px; white-space: nowrap; }
.top-item .logo { width: 41px; height: 26px; margin-top: 3px; margin-bottom: -2px; }
.current::after {
  content: "";
  position: absolute;
  left: 50%;
  bottom: 0;
  margin-left: -11px;
  border: 11px solid transparent;
  border-top: 0;
  border-bottom-color: #fff;
}
.top-right {
  margin-left: auto;
  padding-right: 21px;
  display: flex;
  align-items: center;
  color: #fff;
}
.t-star { font-size: 29px; margin-right: 42px; }
.t-print { font-size: 33px; margin-right: 13px; }
.t-help { font-size: 33px; margin-right: 27px; }
.avatar { width: 63px; height: 63px; margin-right: 8px; }
.t-user { font-size: 24.6px; margin-right: 15px; }
.t-chevron { font-size: 22px; }

.body { display: flex; height: 1776px; }

/* sidebar */
.sidebar {
  width: 522px;
  flex: none;
  box-sizing: border-box;
  background: #f9f9f9;
  border-right: 1px solid #eee;
  padding: 0 24px 0 20px;
}
.search {
  margin-top: 54px;
  height: 55px;
  box-sizing: border-box;
  border-bottom: 2px solid #ccc;
  border-radius: 0 0 6px 6px;
  display: flex;
  align-items: center;
  padding: 0 14px 0 12px;
  color: #aaa;
}
.s-ico { font-size: 30px; color: #a0a0a0; margin-right: 19px; }
.s-text { flex: 1; font-size: 29.4px; }
.s-caret {
  border: 8px solid transparent;
  border-bottom: 0;
  border-top: 10px solid #808080;
}
.side-list { list-style: none; margin: 30px 0 0; padding: 0; }
.side-item {
  height: 91.2px;
  box-sizing: border-box;
  padding: 0 0 2px 16px;
  border-bottom: 2px solid #eaeaea;
  display: flex;
  align-items: center;
  font-weight: 700;
  font-size: 29.4px;
}
.side-ico { width: 40.5px; color: #8a5a2b; flex: none; }

/* main column */
.main { flex: 1; min-width: 0; padding: 40px 76px 0 88px; }
.tabs {
  display: flex;
  flex-wrap: wrap;
  gap: 10px;
  box-sizing: border-box;
  height: 154px;
  padding: 12px 13px;
  border: 2px solid #e8d9bf;
  border-radius: 20px;
  background: linear-gradient(90deg, #f7ebdc, #f3e3cc);
  align-content: flex-start;
}
.tab {
  height: 58px;
  padding: 0 23px;
  display: flex;
  align-items: center;
  gap: 13px;
  border-radius: 14px;
  font-size: 25.2px;
  color: #12205a;
  white-space: nowrap;
}
.tab span { margin-top: -2px; }
.tab .ic { color: #8a5a2b; font-size: 25px; }
.tab.active { background: #8a5a2b; }
.tab.active .ic { color: #fff; }

.section-title {
  margin: 0;
  display: flex;
  align-items: center;
  font-size: 30.8px;
  font-weight: 700;
  line-height: 40px;
  color: #4a3520;
}
.section-title .ic { font-size: 30px; color: #8a5a2b; }
.ruled {
  margin-top: 39px;
  padding-bottom: 13px;
  border-bottom: 4px solid #dfa53a;
  gap: 22px;
}
.moves { margin-top: 108px; gap: 21px; }

.card {
  margin-top: 20px;
  box-sizing: border-box;
  height: 1334px;
  padding: 39px 35px 0 36px;
  background: #fff;
  border: 2px solid #eadcc5;
  border-left: 10px solid #8a5a2b;
  border-radius: 24px;
}
.card-title {
  margin: 0 0 41px;
  display: flex;
  align-items: center;
  gap: 23px;
  height: 34px;
  font-size: 34.3px;
  font-weight: 700;
  color: #4a3520;
}
.card-title .ic { color: #8a5a2b; font-size: 34px; }

.stats { display: flex; gap: 20px; margin-bottom: 20px; }
.stat {
  box-sizing: border-box;
  height: 152px;
  display: flex;
  align-items: center;
  gap: 25px;
  padding: 0 32px 0 33px;
  border: 2px solid #eadcc5;
  border-left: 9px solid;
  border-radius: 24px;
  background: #fff;
  box-shadow: 0 3px 8px rgba(90, 60, 20, 0.06);
}
.stat.blue { border-left-color: #3182ce; }
.stat.blue .stat-ico { color: #3182ce; }
.stat.teal { border-left-color: #17a89a; }
.stat.teal .stat-ico { color: #17a89a; }
.stat.green { border-left-color: #38a85a; }
.stat.green .stat-ico { color: #38a85a; }
.stat-ico {
  width: 92px;
  height: 92px;
  border-radius: 24px;
  background: #f9f3e8;
  display: flex;
  align-items: center;
  justify-content: center;
  font-size: 38px;
}
.stat-text { display: flex; flex-direction: column; }
.stat-text strong { font-size: 42px; line-height: 48px; color: #4a3520; }
.stat-text span { font-size: 24px; line-height: 32px; margin-top: 3px; color: #857766; white-space: nowrap; }

.form-row {
  box-sizing: border-box;
  width: fit-content;
  height: 110px;
  margin-bottom: 20px;
  padding: 0 30px 0 21px;
  display: flex;
  align-items: center;
  gap: 9px;
  background: #f9f3e8;
  border-radius: 20px;
}
.form-row label { font-weight: 700; margin-right: -1px; white-space: nowrap; color: #111; }
.form-row input {
  box-sizing: border-box;
  height: 49px;
  border: 0;
  border-bottom: 2px solid #ddd;
  border-radius: 6px;
  padding: 0 9px;
  background: #fff;
  font: inherit;
  color: #111;
  outline: none;
}
.form-row input::placeholder { color: #ccc; }
.in-amount { width: 149px; }
.in-label { width: 375px; }
.fake-select, .native-select {
  box-sizing: border-box;
  width: 271px;
  height: 55px;
  border: 0;
  border-bottom: 2px solid #ddd;
  border-radius: 6px;
  background: #fff;
  font: inherit;
  color: #111;
}
.fake-select {
  margin-top: 6px;
  padding: 4px 13px 0 12px;
  display: flex;
  align-items: center;
  justify-content: space-between;
}
.fake-select i {
  border: 8px solid transparent;
  border-bottom: 0;
  border-top: 10px solid #888;
}
.select-wrap { position: relative; margin-top: 2px; height: 56px; }
.native-select {
  display: block;
  appearance: none;
  padding: 0 0 0 12px;
  height: 56px;
  outline: none;
}
.select-chev {
  position: absolute;
  right: 5px;
  top: 17px;
  font-size: 21px;
  color: #111;
  pointer-events: none;
}
.btn {
  box-sizing: border-box;
  height: 65px;
  border: 2px solid #aaa;
  border-radius: 6px;
  background: linear-gradient(#f8f8f8, #e6e6e6);
  display: flex;
  align-items: center;
  justify-content: center;
  font-family: inherit;
}
.btn-arrow { width: 180px; margin-left: 9px; font-size: 28.5px; }
.btn-arrow.in { color: #1f9d6b; }
.btn-arrow.out { color: #e04848; }
.closing { background: #fdeaea; padding-right: 31px; gap: 9px; }
.closing label { margin-right: 0; }
.plain { white-space: nowrap; color: #111; }
.btn-close {
  width: 372px;
  margin-left: 10px;
  gap: 6px;
  font-size: 26.6px;
  font-weight: 700;
  color: #4a4a4a;
}
.btn-close .ic { font-size: 28.5px; }

.table-wrap {
  margin: 21px 0 0;
  border: 2px solid #d9d9d9;
  border-bottom-width: 3px;
  border-radius: 12px;
  overflow: hidden;
}
table { width: 100%; border-collapse: collapse; table-layout: fixed; }
.c1 { width: 605px; }
.c2 { width: 642px; }
.c3 { width: 500px; }
th {
  height: 90px;
  padding: 0 21px 0 24px;
  background: #f0f0f0;
  font-weight: 400;
  text-align: left;
  color: #444;
}
td { height: 97.6px; padding: 0 21px 3px 24px; box-sizing: border-box; color: #222; }
tbody tr + tr td { border-top: 2px solid #eee; }
tbody tr:nth-child(even) td { background: #fafafa; }
.num { text-align: right; }
.neg { color: #e04848; }
.pos { color: #1f9d6b; }
</style>
